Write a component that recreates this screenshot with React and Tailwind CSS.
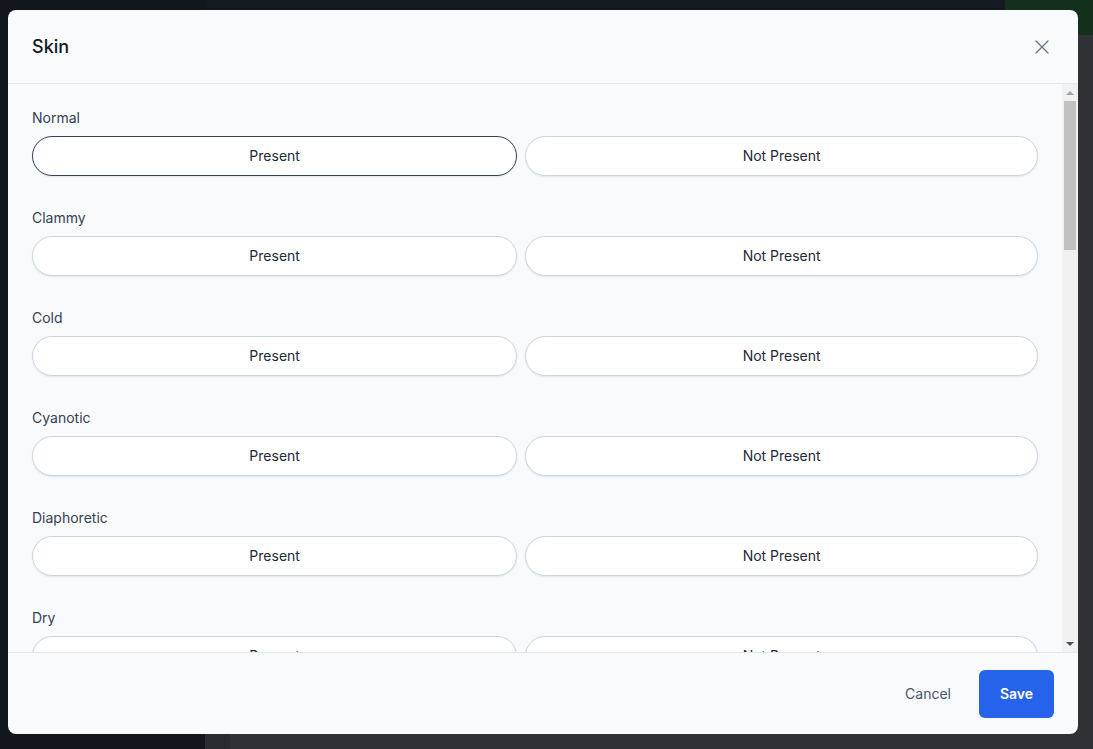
import React, { useState } from 'react';
import { X } from 'lucide-react';

const FINDINGS = [
  'Normal',
  'Clammy',
  'Cold',
  'Cyanotic',
  'Diaphoretic',
  'Dry',
  'Flushed',
  'Hot',
  'Jaundiced',
  'Mottled',
  'Pale',
  'Warm',
  'Moist',
  'Ashen',
  'Tenting',
  'Rash',
  'Lacerations',
  'Bruising',
  'Burns',
  'Edema',
];

const Choice = ({ label, active, onClick }) => (
  <button
    type="button"
    onClick={onClick}
    className={`flex-auto h-10 rounded-full bg-white text-sm text-gray-800 border shadow-[0_1px_2px_rgba(15,23,42,0.08)] ${
      active ? 'border-[#334155]' : 'border-[#cbd5e1]'
    }`}
  >
    {label}
  </button>
);

// classic scrollbar look, drawn because the window hides native ones
const ScrollTrack = () => (
  <div className="flex w-[16px] shrink-0 flex-col bg-[#f1f1f1]">
    <div className="flex h-[17px] items-center justify-center">
      <div className="h-0 w-0 border-x-[4px] border-b-[4px] border-x-transparent border-b-[#a3a3a3]" />
    </div>
    <div className="mx-[2px] h-[149px] bg-[#c1c1c1]" />
    <div className="flex-1" />
    <div className="flex h-[17px] items-center justify-center">
      <div className="h-0 w-0 border-x-[4px] border-t-[4px] border-x-transparent border-t-[#505050]" />
    </div>
  </div>
);

export default function App() {
  const [values, setValues] = useState({ Normal: 'Present' });

  const pick = (name, v) => setValues((prev) => ({ ...prev, [name]: v }));

  return (
    <div className="relative h-[749px] w-[1093px] overflow-hidden bg-[#13171f] font-['Inter','Liberation_Sans',sans-serif]">
      {/* app behind the overlay */}
      <div className="flex h-full">
        <div className="w-[205px] bg-[#12161d]" />
        <div className="flex flex-1 flex-col">
          <div className="flex h-[35px]">
            <div className="flex-1 bg-[#141820]" />
            <div className="w-[88px] bg-[#13301d]" />
          </div>
          <div className="flex flex-1">
            <div className="w-[25px] bg-[#2b2c2f]" />
            <div className="flex-1 bg-[#303134]" />
          </div>
        </div>
      </div>

      {/* modal */}
      <div className="absolute left-[8px] top-[10px] flex h-[724px] w-[1070px] flex-col overflow-hidden rounded-lg bg-[#f8fafc]">
        <div className="flex h-[74px] shrink-0 items-center justify-between border-b border-[#e2e8f0] px-6">
          <h2 className="text-lg font-medium text-gray-900">Skin</h2>
          <button type="button" className="text-[#64748b]">
            <X size={24} strokeWidth={1.25} />
          </button>
        </div>

        <div className="flex min-h-0 flex-1">
          <div className="min-h-0 flex-1 overflow-y-auto px-6 pt-6 pb-8 [scrollbar-width:none]">
            <div className="flex flex-col gap-8">
              {FINDINGS.map((name) => (
                <div key={name}>
                  <div className="mb-2 text-sm leading-5 text-gray-700">{name}</div>
                  <div className="flex gap-2">
                    <Choice
                      label="Present"
                      active={values[name] === 'Present'}
                      onClick={() => pick(name, 'Present')}
                    />
                    <Choice
                      label="Not Present"
                      active={values[name] === 'Not Present'}
                      onClick={() => pick(name, 'Not Present')}
                    />
                  </div>
                </div>
              ))}
            </div>
          </div>
          <ScrollTrack />
        </div>

        <div className="flex h-[82px] shrink-0 items-center justify-end gap-1 border-t border-[#e2e8f0] px-6">
          <button type="button" className="h-12 px-6 text-sm text-[#475569]">
            Cancel
          </button>
          <button
            type="button"
            className="h-12 w-[75px] rounded-md bg-[#2563eb] text-sm font-semibold text-white"
          >
            Save
          </button>
        </div>
      </div>
    </div>
  );
}
